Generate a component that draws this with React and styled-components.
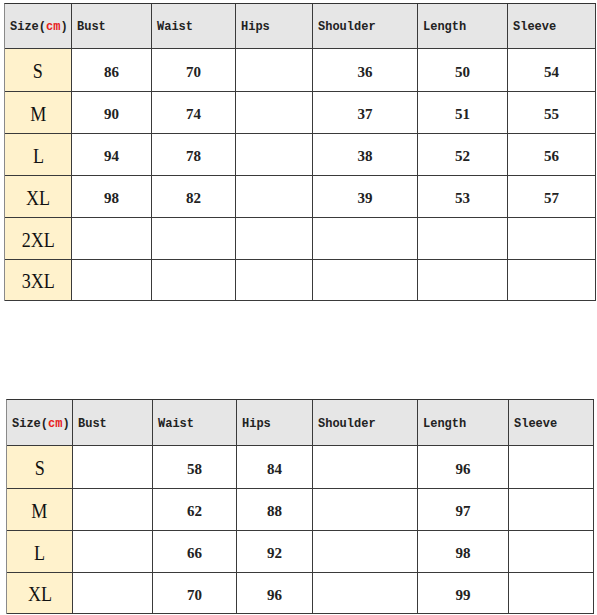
import React from 'react'
import styled, { createGlobalStyle } from 'styled-components'

const GlobalStyle = createGlobalStyle`
  body {
    margin: 0;
    background: #fff;
  }
`

const headers = ['Bust', 'Waist', 'Hips', 'Shoulder', 'Length', 'Sleeve']

const firstTable = {
  cols: '67px 80px 84px 77px 105px 90px 88px',
  offset: 4,
  head: 45,
  rows: [
    { size: 'S', values: ['86', '70', '', '36', '50', '54'], h: 43 },
    { size: 'M', values: ['90', '74', '', '37', '51', '55'], h: 42 },
    { size: 'L', values: ['94', '78', '', '38', '52', '56'], h: 42 },
    { size: 'XL', values: ['98', '82', '', '39', '53', '57'], h: 42 },
    { size: '2XL', values: ['', '', '', '', '', ''], h: 42 },
    { size: '3XL', values: ['', '', '', '', '', ''], h: 41 },
  ],
}

const secondTable = {
  cols: '66px 80px 84px 76px 105px 91px 85px',
  offset: 6,
  head: 46,
  rows: [
    { size: 'S', values: ['', '58', '84', '', '96', ''], h: 43 },
    { size: 'M', values: ['', '62', '88', '', '97', ''], h: 42 },
    { size: 'L', values: ['', '66', '92', '', '98', ''], h: 42 },
    { size: 'XL', values: ['', '70', '96', '', '99', ''], h: 41 },
  ],
}

export default function App() {
  return (
    <>
      <GlobalStyle />
      <Page>
        <SizeChart data={firstTable} top={3} />
        <SizeChart data={secondTable} top={98} />
      </Page>
    </>
  )
}

function SizeChart({ data, top }) {
  return (
    <Grid $cols={data.cols} $offset={data.offset} $top={top}>
      <HeadCell $h={data.head}>
        Size(<Red>cm</Red>)
      </HeadCell>
      {headers.map(h => (
        <HeadCell key={h} $h={data.head}>{h}</HeadCell>
      ))}
      {data.rows.map(row => (
        <React.Fragment key={row.size}>
          <SizeCell $h={row.h}>
            <SizeLabel>{row.size}</SizeLabel>
          </SizeCell>
          {row.values.map((v, i) => (
            <ValueCell key={i} $h={row.h}>{v}</ValueCell>
          ))}
        </React.Fragment>
      ))}
    </Grid>
  )
}

const Page = styled.div`
  display: flex;
  flex-direction: column;
  width: 597px;
`

const Grid = styled.div`
  display: grid;
  grid-template-columns: ${p => p.$cols};
  margin-left: ${p => p.$offset}px;
  margin-top: ${p => p.$top}px;
  border-top: 1px solid #333;
  border-left: 1px solid #8a8a8a;
  width: max-content;
`

const Cell = styled.div`
  box-sizing: border-box;
  height: ${p => p.$h}px;
  border-right: 1px solid #3a3a3a;
  border-bottom: 1px solid #3a3a3a;
  display: flex;
  align-items: center;
`

const HeadCell = styled(Cell)`
  background: #e6e6e6;
  padding-left: 5px;
  padding-top: 2px;
  font-family: "Liberation Mono", "DejaVu Sans Mono", monospace;
  font-weight: 700;
  font-size: 12px;
  color: #222;
`

const Red = styled.span`
  color: #e8201b;
`

const SizeCell = styled(Cell)`
  background: #fff2cc;
  justify-content: center;
  padding-top: 3px;
`

const SizeLabel = styled.span`
  display: inline-block;
  font-family: "Liberation Serif", "DejaVu Serif", serif;
  font-size: 21px;
  color: #111;
  transform: scaleX(0.86);
`

const ValueCell = styled(Cell)`
  justify-content: center;
  background: #fff;
  font-family: "Liberation Serif", "DejaVu Serif", serif;
  font-weight: 700;
  font-size: 15px;
  color: #222;
  padding-top: 4px;
`
